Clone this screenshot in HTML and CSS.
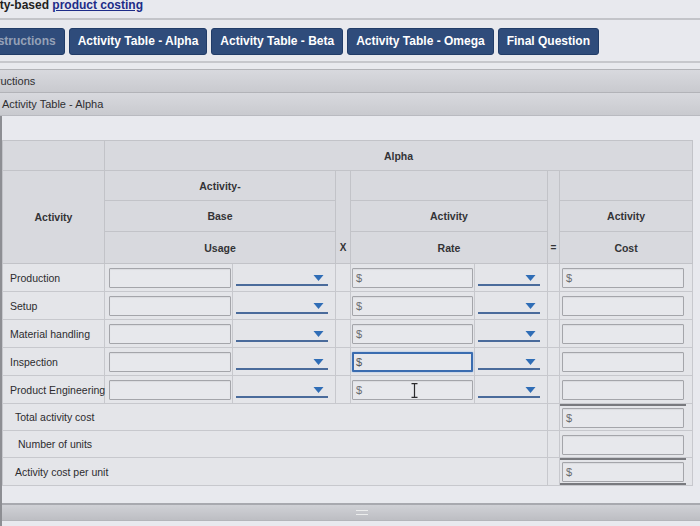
FILE: index.html
```html
<!DOCTYPE html>
<html>
<head>
<meta charset="utf-8">
<link rel="stylesheet" href="styles.css">
</head>
<body>
<div class="title">Activity-based <a href="#">product costing</a></div>
<div class="tabs">
  <div class="tab dim">Instructions</div>
  <div class="tab">Activity Table - Alpha</div>
  <div class="tab">Activity Table - Beta</div>
  <div class="tab">Activity Table - Omega</div>
  <div class="tab">Final Question</div>
</div>
<div class="bar bar-first">Instructions</div>
<div class="bar bar-second">Activity Table - Alpha</div>
<div class="content">
  <table class="grid">
    <colgroup>
      <col class="c-act"><col class="c-uin"><col class="c-udd"><col class="c-op1">
      <col class="c-rin"><col class="c-rdd"><col class="c-op2"><col class="c-cost">
    </colgroup>
    <thead>
      <tr class="h1"><th></th><th colspan="7">Alpha</th></tr>
      <tr class="h2">
        <th rowspan="3">Activity</th>
        <th colspan="2">Activity-</th>
        <th rowspan="3" class="op">X</th>
        <th colspan="2"></th>
        <th rowspan="3" class="op">=</th>
        <th></th>
      </tr>
      <tr class="h3"><th colspan="2">Base</th><th colspan="2">Activity</th><th>Activity</th></tr>
      <tr class="h4"><th colspan="2">Usage</th><th colspan="2">Rate</th><th>Cost</th></tr>
    </thead>
    <tbody>
      <tr>
        <td class="lbl">Production</td>
        <td><div class="field f-u"></div></td>
        <td><div class="dd"><svg class="tri" viewBox="0 0 10 6"><path d="M0 0H10L5 6Z"/></svg></div></td>
        <td></td>
        <td><div class="field f-r"><span class="cur">$</span></div></td>
        <td><div class="dd"><svg class="tri" viewBox="0 0 10 6"><path d="M0 0H10L5 6Z"/></svg></div></td>
        <td></td>
        <td><div class="field f-c"><span class="cur">$</span></div></td>
      </tr>
      <tr>
        <td class="lbl">Setup</td>
        <td><div class="field f-u"></div></td>
        <td><div class="dd"><svg class="tri" viewBox="0 0 10 6"><path d="M0 0H10L5 6Z"/></svg></div></td>
        <td></td>
        <td><div class="field f-r"><span class="cur">$</span></div></td>
        <td><div class="dd"><svg class="tri" viewBox="0 0 10 6"><path d="M0 0H10L5 6Z"/></svg></div></td>
        <td></td>
        <td><div class="field f-c"></div></td>
      </tr>
      <tr>
        <td class="lbl">Material handling</td>
        <td><div class="field f-u"></div></td>
        <td><div class="dd"><svg class="tri" viewBox="0 0 10 6"><path d="M0 0H10L5 6Z"/></svg></div></td>
        <td></td>
        <td><div class="field f-r"><span class="cur">$</span></div></td>
        <td><div class="dd"><svg class="tri" viewBox="0 0 10 6"><path d="M0 0H10L5 6Z"/></svg></div></td>
        <td></td>
        <td><div class="field f-c"></div></td>
      </tr>
      <tr>
        <td class="lbl">Inspection</td>
        <td><div class="field f-u"></div></td>
        <td><div class="dd"><svg class="tri" viewBox="0 0 10 6"><path d="M0 0H10L5 6Z"/></svg></div></td>
        <td></td>
        <td><div class="field f-r focus"><span class="cur">$</span></div></td>
        <td><div class="dd"><svg class="tri" viewBox="0 0 10 6"><path d="M0 0H10L5 6Z"/></svg></div></td>
        <td></td>
        <td><div class="field f-c"></div></td>
      </tr>
      <tr>
        <td class="lbl">Product Engineering</td>
        <td><div class="field f-u"></div></td>
        <td><div class="dd"><svg class="tri" viewBox="0 0 10 6"><path d="M0 0H10L5 6Z"/></svg></div></td>
        <td></td>
        <td><div class="field f-r"><span class="cur">$</span><svg class="ibeam" viewBox="0 0 7 15"><path d="M0.5 0.7H6.5M3.5 0.7V14.3M0.5 14.3H6.5"/></svg></div></td>
        <td><div class="dd"><svg class="tri" viewBox="0 0 10 6"><path d="M0 0H10L5 6Z"/></svg></div></td>
        <td></td>
        <td><div class="field f-c"></div></td>
      </tr>
      <tr class="tot">
        <td class="lbl lbl-in" colspan="6">Total activity cost</td>
        <td></td>
        <td class="acct-cell"><div class="acct"><div class="field f-c"><span class="cur">$</span></div></div></td>
      </tr>
      <tr class="tot">
        <td class="lbl lbl-in2" colspan="6">Number of units</td>
        <td></td>
        <td class="acct-cell"><div class="acct plain"><div class="field f-c"></div></div></td>
      </tr>
      <tr class="tot">
        <td class="lbl lbl-in" colspan="6">Activity cost per unit</td>
        <td></td>
        <td class="acct-cell"><div class="acct both"><div class="field f-c"><span class="cur">$</span></div></div></td>
      </tr>
    </tbody>
  </table>
  <div class="footbar"><span class="handle"></span></div>
</div>
</body>
</html>
```
FILE: styles.css
```css
html, body {
  margin: 0;
  padding: 0;
}
body {
  width: 700px;
  height: 526px;
  overflow: hidden;
  background: #e8e9ee;
  font-family: "Liberation Sans", Arial, sans-serif;
  color: #2b2b2d;
}
.title {
  height: 20px;
  margin-top: -2px;
  line-height: 15px;
  font-size: 12px;
  font-weight: bold;
  text-indent: -33px;
  white-space: nowrap;
  color: #1f1f22;
  border-bottom: 2px solid #c3c4c9;
}
.title a {
  color: #1d2c88;
  text-decoration: underline;
}
.tabs {
  display: flex;
  gap: 4px;
  margin-left: -22px;
  padding: 8px 0 6px;
  border-bottom: 2px solid #c6c7cc;
}
.tab {
  background: #2f4c7b;
  color: #ffffff;
  font-weight: bold;
  font-size: 12px;
  line-height: 15px;
  padding: 5px 8px;
  border: 1px solid #213c68;
  border-radius: 3px;
  white-space: nowrap;
}
.tab.dim {
  color: #95a1b7;
}
.bar {
  height: 22px;
  line-height: 22px;
  font-size: 11px;
  color: #2e2e31;
  border-top: 1px solid #b2b3b8;
  background: linear-gradient(#d8d9de, #c9cacf);
  white-space: nowrap;
}
.bar-first {
  margin-top: 6px;
  text-indent: -21px;
}
.bar-second {
  padding-left: 2px;
  border-bottom: 1px solid #b9bac0;
}
.content {
  padding-top: 24px;
  border-left: 2px solid #8d8e93;
  height: 400px;
}
.grid {
  width: 690px;
  table-layout: fixed;
  border-collapse: collapse;
  border: 1px solid #b1b2b7;
}
.c-act { width: 102px; }
.c-uin { width: 128px; }
.c-udd { width: 103px; }
.c-op1 { width: 15px; }
.c-rin { width: 124px; }
.c-rdd { width: 73px; }
.c-op2 { width: 12px; }
.c-cost { width: 133px; }
.grid th {
  background: #d8d9de;
  border: 1px solid #c2c3c8;
  font-size: 10.5px;
  font-weight: bold;
  color: #333336;
  padding: 0;
  text-align: center;
}
.h1 th { height: 29px; }
.h2 th { height: 29px; }
.h3 th { height: 30px; }
.h4 th { height: 31px; }
.grid th.op {
  vertical-align: bottom;
  padding-bottom: 10px;
  font-size: 10px;
}
.grid td {
  background: #e4e5e9;
  border: 1px solid #c7c8cd;
  padding: 0;
  height: 27px;
  vertical-align: middle;
}
.grid td.lbl {
  font-size: 10.5px;
  color: #2c2c2f;
  padding-left: 7px;
  white-space: nowrap;
  overflow: visible;
}
.grid td.lbl-in { padding-left: 12px; }
.grid td.lbl-in2 { padding-left: 15px; }
.field {
  position: relative;
  box-sizing: border-box;
  height: 20px;
  border: 1px solid #a4a5aa;
  border-radius: 1px;
  background: #e7e8ec;
  box-shadow: inset 0 1px 1px rgba(0, 0, 0, 0.06);
}
.f-u { width: 122px; margin-left: 4px; }
.f-r { width: 121px; margin-left: 1px; }
.f-c { width: 122px; margin-left: 2px; }
.field.focus {
  border: 2px solid #3a6cb0;
  box-shadow: 0 0 2px #8bb0e0;
}
.cur {
  display: block;
  font-size: 11px;
  line-height: 18px;
  padding-left: 3px;
  color: #6a6b70;
}
.field.focus .cur {
  line-height: 16px;
  padding-left: 2px;
  color: #55565b;
}
.ibeam {
  position: absolute;
  left: 58px;
  top: 2px;
  width: 7px;
  height: 15px;
  fill: none;
  stroke: #2a2a2d;
  stroke-width: 1.2;
}
.dd {
  position: relative;
  height: 17px;
  margin: 0 7px 2px 3px;
  border-bottom: 2px solid #4a6b9b;
}
.tri {
  position: absolute;
  right: 4px;
  bottom: 3px;
  width: 11px;
  height: 6px;
  fill: #2f6db6;
}
.grid .tot td { height: 26px; }
.grid td.acct-cell {
  vertical-align: top;
  padding-top: 0;
}
.acct {
  width: 126px;
  border-top: 2px solid #78797e;
  padding-top: 2px;
}
.acct.plain {
  border-top-color: transparent;
  padding-top: 2px;
}
.acct.both {
  border-bottom: 2px solid #78797e;
  padding-bottom: 1px;
}
.footbar {
  margin-top: 17px;
  height: 15px;
  border-top: 2px solid #a8a9af;
  border-bottom: 1px solid #b4b5ba;
  background: linear-gradient(#d0d1d6, #bdbec3);
  display: flex;
  justify-content: center;
  align-items: center;
  padding-left: 22px;
}
.handle {
  width: 12px;
  height: 3px;
  border-top: 1px solid #eceded;
  border-bottom: 1px solid #eceded;
}
```
